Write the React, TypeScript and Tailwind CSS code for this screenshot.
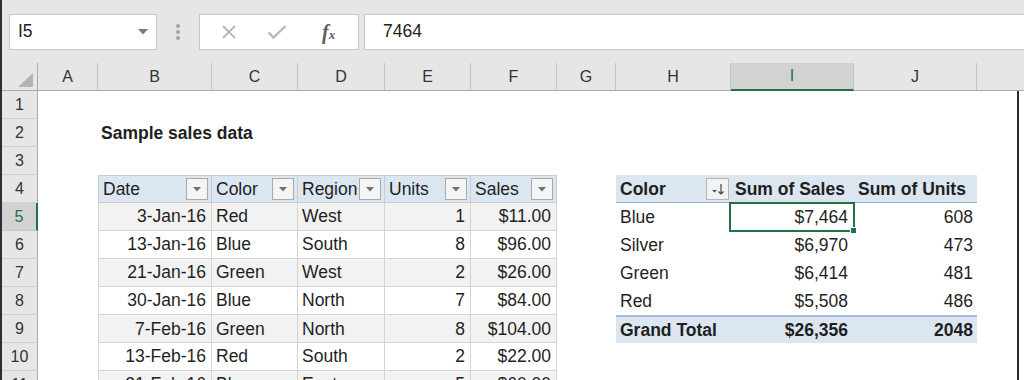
import type { ReactNode } from "react";

const GRID =
  "grid h-[28px] grid-cols-[36px_60px_114px_86px_87px_86px_86px_59px_115px_123px_123px_1fr]";

const LETTERS = ["A", "B", "C", "D", "E", "F", "G", "H", "I", "J", ""];

const HEADERS = ["Date", "Color", "Region", "Units", "Sales"];
const RIGHT = [true, false, false, true, true];

const SALES = [
  ["3-Jan-16", "Red", "West", "1", "$11.00"],
  ["13-Jan-16", "Blue", "South", "8", "$96.00"],
  ["21-Jan-16", "Green", "West", "2", "$26.00"],
  ["30-Jan-16", "Blue", "North", "7", "$84.00"],
  ["7-Feb-16", "Green", "North", "8", "$104.00"],
  ["13-Feb-16", "Red", "South", "2", "$22.00"],
  ["21-Feb-16", "Blue", "East", "5", "$60.00"],
];

const PIVOT = [
  ["Blue", "$7,464", "608"],
  ["Silver", "$6,970", "473"],
  ["Green", "$6,414", "481"],
  ["Red", "$5,508", "486"],
];

function FilterBtn() {
  return (
    <div className="flex h-[22px] w-[22px] shrink-0 items-center justify-center border border-[#a9a9a9] bg-[#f4f4f4]">
      <svg width="8" height="5" viewBox="0 0 8 5">
        <path d="M0 0h8L4 4.5z" fill="#707070" />
      </svg>
    </div>
  );
}

function SortBtn() {
  return (
    <div className="flex h-[22px] w-[23px] shrink-0 items-center justify-center border border-[#b4b4b4] bg-[#f2f2f2]">
      <svg width="16" height="14" viewBox="0 0 16 14">
        <path d="M2 8h5L4.5 10.5z" fill="#555" />
        <path d="M11 2v10M8.5 9.5L11 12l2.5-2.5" stroke="#444" strokeWidth="1.2" fill="none" />
      </svg>
    </div>
  );
}

function Cell({ children, className = "" }: { children?: ReactNode; className?: string }) {
  return <div className={`flex items-center whitespace-nowrap px-1 ${className}`}>{children}</div>;
}

function salesCells(r: number) {
  if (r === 2) {
    return [
      <Cell key="b" className="pl-[3px] font-bold">
        Sample sales data
      </Cell>,
      <div key="c" />,
      <div key="d" />,
      <div key="e" />,
      <div key="f" />,
    ];
  }
  if (r === 4) {
    return HEADERS.map((h, i) => (
      <Cell
        key={h}
        className={`justify-between border-y border-r border-[#c6ccd4] bg-[#dce6f1] pr-[3px] ${i === 0 ? "border-l" : ""}`}
      >
        <span>{h}</span>
        <FilterBtn />
      </Cell>
    ));
  }
  const row = SALES[r - 5];
  if (!row) return [0, 1, 2, 3, 4].map((i) => <div key={i} />);
  const gray = r % 2 === 1;
  return row.map((v, i) => (
    <Cell
      key={i}
      className={`border-b border-r border-[#d4d4d4] ${gray ? "bg-[#f2f2f2]" : "bg-white"} ${RIGHT[i] ? "justify-end pr-[5px]" : ""} ${i === 0 ? "border-l" : ""}`}
    >
      {v}
    </Cell>
  ));
}

function pivotCells(r: number) {
  if (r === 4) {
    return [
      <Cell key="h" className="justify-between border-b border-[#95b3d7] bg-[#dce6f1] pr-[2px] font-bold">
        <span>Color</span>
        <SortBtn />
      </Cell>,
      <Cell key="i" className="border-b border-[#95b3d7] bg-[#dce6f1] font-bold">
        Sum of Sales
      </Cell>,
      <Cell key="j" className="border-b border-[#95b3d7] bg-[#dce6f1] font-bold">
        Sum of Units
      </Cell>,
    ];
  }
  if (r === 9) {
    return [
      <Cell key="h" className="border-t-2 border-[#a3bcdc] bg-[#dce6f1] font-bold">
        Grand Total
      </Cell>,
      <Cell key="i" className="justify-end border-t-2 border-[#a3bcdc] bg-[#dce6f1] pr-[6px] font-bold">
        $26,356
      </Cell>,
      <Cell key="j" className="justify-end border-t-2 border-[#a3bcdc] bg-[#dce6f1] pr-[4px] font-bold">
        2048
      </Cell>,
    ];
  }
  const row = PIVOT[r - 5];
  if (!row) return [0, 1, 2].map((i) => <div key={i} />);
  return [
    <Cell key="h">{row[0]}</Cell>,
    <Cell key="i" className="relative justify-end pr-[6px]">
      {row[1]}
      {r === 5 && (
        <div className="absolute -top-px -right-px -bottom-px -left-[2px] border-2 border-[#217346]">
          <div className="absolute -right-[4px] -bottom-[4px] h-[7px] w-[7px] border border-white bg-[#217346]" />
        </div>
      )}
    </Cell>,
    <Cell key="j" className="justify-end pr-[4px]">
      {row[2]}
    </Cell>,
  ];
}

function Toolbar() {
  return (
    <div className="flex h-[63px] items-center bg-[#e6e6e6] pl-[7px]">
      <div className="flex h-[36px] w-[148px] items-center justify-between border border-[#c6c6c6] bg-white pr-[8px] pl-[8px] text-[17.5px] text-[#222]">
        <span>I5</span>
        <svg width="10" height="6" viewBox="0 0 10 6">
          <path d="M0 0h10L5 5.5z" fill="#7b7b7b" />
        </svg>
      </div>
      <div className="mx-[19px] flex flex-col gap-[2px]">
        <div className="h-[4px] w-[4px] rounded-full bg-[#a3a3a3]" />
        <div className="h-[4px] w-[4px] rounded-full bg-[#a3a3a3]" />
        <div className="h-[4px] w-[4px] rounded-full bg-[#a3a3a3]" />
      </div>
      <div className="flex h-[36px] w-[160px] items-center border border-[#c6c6c6] bg-white">
        <svg className="ml-[21px]" width="16" height="16" viewBox="0 0 16 16">
          <path d="M2 2l12 12M14 2L2 14" stroke="#b8b8b8" strokeWidth="2" />
        </svg>
        <svg className="ml-[30px]" width="20" height="16" viewBox="0 0 20 16">
          <path d="M1.5 8.5l5 5L18.5 2" stroke="#b8b8b8" strokeWidth="2.4" fill="none" />
        </svg>
        <span className="ml-[35px] font-['Liberation_Serif',serif] text-[20px] font-bold text-[#5e5e5e] italic">
          f<span className="text-[13px]">x</span>
        </span>
      </div>
      <div className="ml-[5px] flex h-[36px] flex-1 items-center border-y border-l border-[#c6c6c6] bg-white pl-[18px] text-[17.5px] text-[#222]">
        7464
      </div>
    </div>
  );
}

function ColumnHeads() {
  return (
    <div className={`${GRID} bg-[#e6e6e6] text-[16px] text-[#333]`}>
      <div className="relative border-r border-b border-[#ababab]">
        <svg className="absolute top-[9px] left-[15px]" width="17" height="16" viewBox="0 0 17 16">
          <path d="M16 1v14H1z" fill="#b3b3b3" />
        </svg>
      </div>
      {LETTERS.map((l, i) =>
        l === "I" ? (
          <div
            key={i}
            className="flex items-center justify-center border-r border-b-2 border-r-[#c4c4c4] border-b-[#217346] bg-[#d2d2d2] text-[#217346]"
          >
            {l}
          </div>
        ) : (
          <div
            key={i}
            className={`flex items-center justify-center border-b border-b-[#ababab] ${l ? "border-r border-r-[#c4c4c4]" : ""}`}
          >
            {l}
          </div>
        ),
      )}
    </div>
  );
}

export default function App() {
  const rows = Array.from({ length: 11 }, (_, i) => i + 1);
  return (
    <div className="h-[380px] w-[1024px] overflow-hidden border-l-2 border-[#2f2f2f] bg-white font-['Liberation_Sans',Arial,sans-serif] text-[17.5px] text-[#1f1f1f]">
      <Toolbar />
      <ColumnHeads />
      <div className="flex">
        <div className="w-[1015px]">
          {rows.map((r) => (
            <div key={r} className={GRID}>
              {r === 5 ? (
                <div className="flex items-center justify-center border-r-2 border-b border-r-[#217346] border-b-[#c8c8c8] bg-[#d2d2d2] text-[16px] text-[#217346]">
                  {r}
                </div>
              ) : (
                <div className="flex items-center justify-center border-r border-b border-r-[#ababab] border-b-[#d0d0d0] bg-[#e6e6e6] text-[16px] text-[#333]">
                  {r}
                </div>
              )}
              <div />
              {salesCells(r)}
              <div />
              {pivotCells(r)}
              <div />
            </div>
          ))}
        </div>
        <div className="w-[2px] bg-[#2b2b2b]" />
        <div className="flex-1 bg-white" />
      </div>
    </div>
  );
}
